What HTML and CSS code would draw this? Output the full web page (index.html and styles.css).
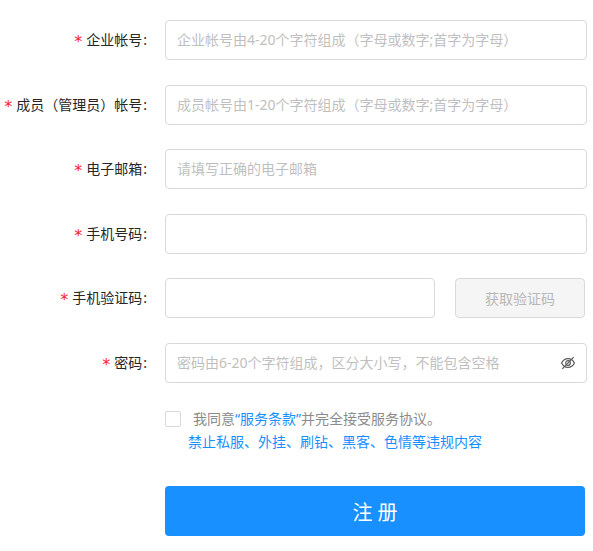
FILE: index.html
```
<!DOCTYPE html>
<html lang="zh-CN">
<head>
	<title>注册</title>
	<meta charset="UTF-8">
	<meta name="viewport" content="width=device-width, initial-scale=1.0">
	<link rel="stylesheet" href="styles.css">
</head>
<body>
	<form class="register">
		<div class="item">
			<label class="label" for="company">企业帐号</label>
			<input class="input" id="company" type="text" placeholder="企业帐号由4-20个字符组成（字母或数字;首字为字母）">
		</div>
		<div class="item">
			<label class="label" for="member">成员（管理员）帐号</label>
			<input class="input" id="member" type="text" placeholder="成员帐号由1-20个字符组成（字母或数字;首字为字母）">
		</div>
		<div class="item">
			<label class="label" for="email">电子邮箱</label>
			<input class="input" id="email" type="email" placeholder="请填写正确的电子邮箱">
		</div>
		<div class="item">
			<label class="label" for="phone">手机号码</label>
			<input class="input" id="phone" type="tel">
		</div>
		<div class="item">
			<label class="label" for="code">手机验证码</label>
			<div class="code">
				<input class="input" id="code" type="text">
				<button class="code-btn" type="button" disabled>获取验证码</button>
			</div>
		</div>
		<div class="item">
			<label class="label" for="password">密码</label>
			<div class="password">
				<input class="input" id="password" type="password" placeholder="密码由6-20个字符组成，区分大小写，不能包含空格">
				<button class="eye" type="button" aria-label="显示密码">
					<svg viewBox="0 0 14 14" width="14" height="14">
						<path d="M.6 7C2 4 4.200 2.600 7 2.600S12 4 13.400 7C12 10 9.800 11.400 7 11.400S2 10 .6 7Z"/>
						<circle cx="7" cy="7" r="2.300"/>
						<path d="M1.300 12.800 12.700 1.200"/>
					</svg>
				</button>
			</div>
		</div>
		<div class="agree">
			<div class="agree-row">
				<input class="check" id="agree" type="checkbox">
				<label for="agree">我同意<a href="#terms">“服务条款”</a>并完全接受服务协议。</label>
			</div>
			<a class="notice" href="#rules">禁止私服、外挂、刷钻、黑客、色情等违规内容</a>
		</div>
		<button class="submit" type="submit">注 册</button>
	</form>
</body>
</html>
```

FILE: styles.css
```
* {
	box-sizing: border-box;
}

body {
	margin: 0;
	background-color: #fff;
	color: #262626;
	font-family: "Noto Sans", "Noto Sans CJK SC", sans-serif;
	font-size: 14px;
	line-height: 22px;
}

input, button {
	font-family: inherit;
	font-size: inherit;
}

a {
	color: #1890ff;
	text-decoration: none;
}

.register {
	padding: 20px 6px 14px 0;
}

.item {
	display: grid;
	grid-template-columns: 147px minmax(0, 1fr);
	column-gap: 18px;
	align-items: center;
	margin-bottom: 24px;
}

.item:nth-child(odd) {
	margin-bottom: 25px;
}

.label {
	text-align: right;
	white-space: nowrap;
}

.label::before {
	content: "*";
	margin-right: 4px;
	color: #f5222d;
	font-family: "DejaVu Sans", sans-serif;
	font-size: 16px;
	line-height: 1;
	vertical-align: -2px;
}

.label::after {
	content: ":";
	margin-left: 1px;
}

.input {
	display: block;
	width: 100%;
	height: 40px;
	padding: 0 11px 2px;
	border: 1px solid #d9d9d9;
	border-radius: 4px;
	background-color: #fff;
	color: #262626;
	outline: none;
}

.input::placeholder {
	color: #bfbfbf;
}

.input:focus {
	border-color: #1890ff;
}

.code {
	display: flex;
	gap: 20px;
	padding-right: 2px;
}

.code .input {
	flex: 1;
	min-width: 0;
}

.code-btn {
	width: 130px;
	height: 40px;
	border: 1px solid #d9d9d9;
	border-radius: 4px;
	background-color: #f5f5f5;
	color: #b8b8b8;
}

.password {
	position: relative;
}

.password .input {
	padding-right: 36px;
}

/* toggle lies over the right end of the field */
.eye {
	position: absolute;
	top: 0;
	right: 12px;
	display: flex;
	align-items: center;
	height: 40px;
	padding: 0;
	border: 0;
	background: none;
	cursor: pointer;
}

.eye svg {
	fill: none;
	stroke: #595959;
	stroke-width: 1.2;
}

.agree {
	margin-left: 165px;
	color: #8c8c8c;
	line-height: 23px;
}

.agree-row {
	display: flex;
	align-items: center;
	gap: 12px;
}

.check {
	appearance: none;
	width: 16px;
	height: 16px;
	margin: 0;
	border: 1px solid #d9d9d9;
	border-radius: 2px;
	background-color: #fff;
}

.check:checked {
	border-color: #1890ff;
	background-color: #1890ff;
}

.notice {
	display: block;
	padding-left: 23px;
}

.submit {
	display: block;
	width: calc(100% - 167px);
	height: 50px;
	margin: 33px 2px 0 165px;
	border: 0;
	border-radius: 4px;
	background-color: #1890ff;
	color: #fff;
	font-size: 20px;
	cursor: pointer;
}
```
